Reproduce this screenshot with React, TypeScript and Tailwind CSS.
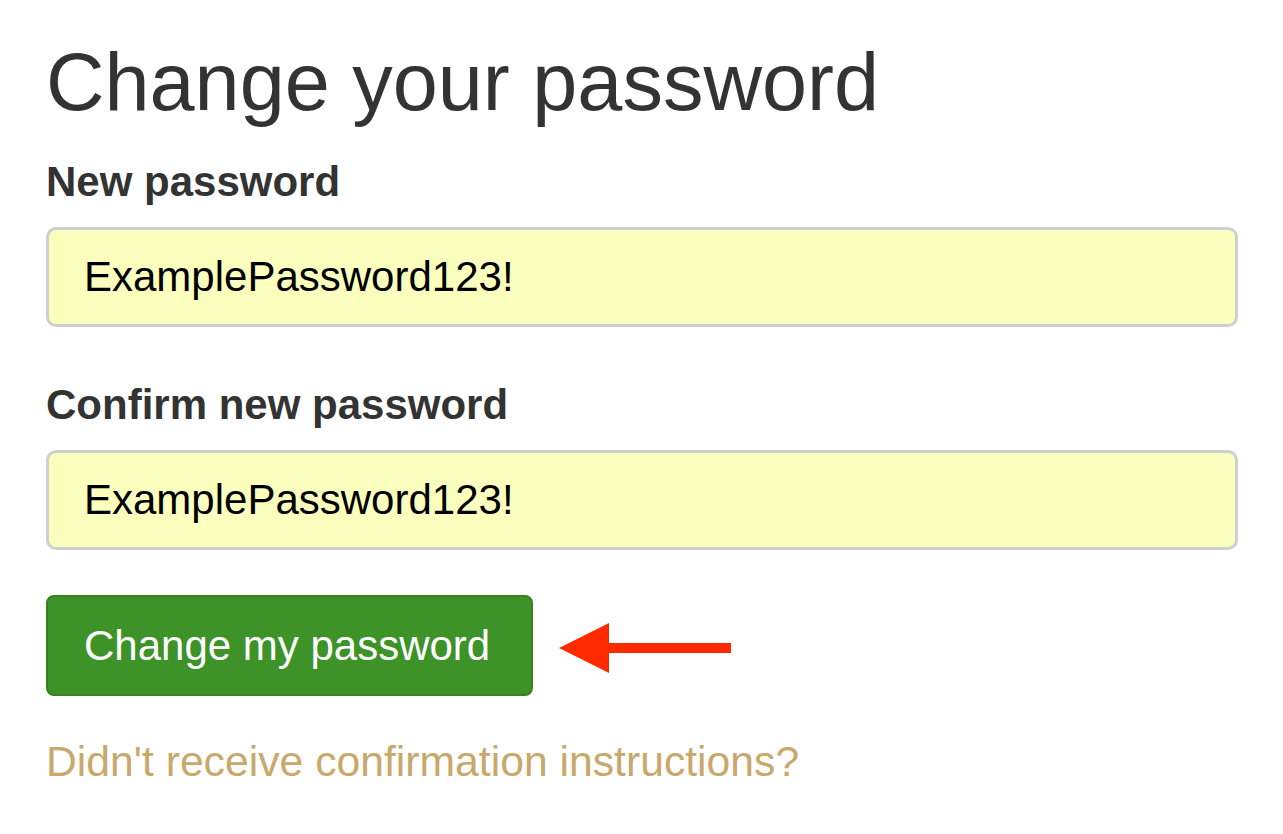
import { useState } from "react";

const fieldClass =
  "block w-full h-[100px] rounded-[10px] border-[3px] border-[#cfcfcf] bg-[#faffbd] pl-[35px] pr-4 text-[42px] text-black outline-none";

function ArrowLeft() {
  return (
    <svg width="172" height="50" viewBox="0 0 172 50" className="ml-[26px] mt-[5px] shrink-0">
      <polygon points="0,25 50,0 50,50" fill="#ff2a00" />
      <rect x="49" y="20" width="123" height="10" fill="#ff2a00" />
    </svg>
  );
}

export default function App() {
  const [password, setPassword] = useState("ExamplePassword123!");
  const [confirm, setConfirm] = useState("ExamplePassword123!");

  return (
    <div
      className="min-h-[834px] bg-white pl-[46px] pr-[45px] pt-[38px] text-[#333333]"
      style={{ fontFamily: '"Liberation Sans", Arial, sans-serif' }}
    >
      <h1 className="text-[81px] leading-[88px] font-normal">Change your password</h1>

      <form onSubmit={(e) => e.preventDefault()}>
        <label className="mt-[32px] block text-[42px] leading-[48px] font-bold">New password</label>
        <input
          type="text"
          className={`mt-[21px] ${fieldClass}`}
          value={password}
          onChange={(e) => setPassword(e.target.value)}
        />

        <label className="mt-[54px] block text-[42px] leading-[48px] font-bold">Confirm new password</label>
        <input
          type="text"
          className={`mt-[21px] ${fieldClass}`}
          value={confirm}
          onChange={(e) => setConfirm(e.target.value)}
        />

        <div className="mt-[45px] flex items-center">
          <button
            type="submit"
            className="h-[101px] rounded-[8px] border-2 border-[#36821f] bg-[#3d9228] pl-[36px] pr-[41px] text-[42px] leading-none text-white"
          >
            Change my password
          </button>
          <ArrowLeft />
        </div>
      </form>

      <a href="#" className="mt-[41px] block w-fit text-[42.7px] leading-[48px] text-[#c8a86b]">
        Didn't receive confirmation instructions?
      </a>
    </div>
  );
}
